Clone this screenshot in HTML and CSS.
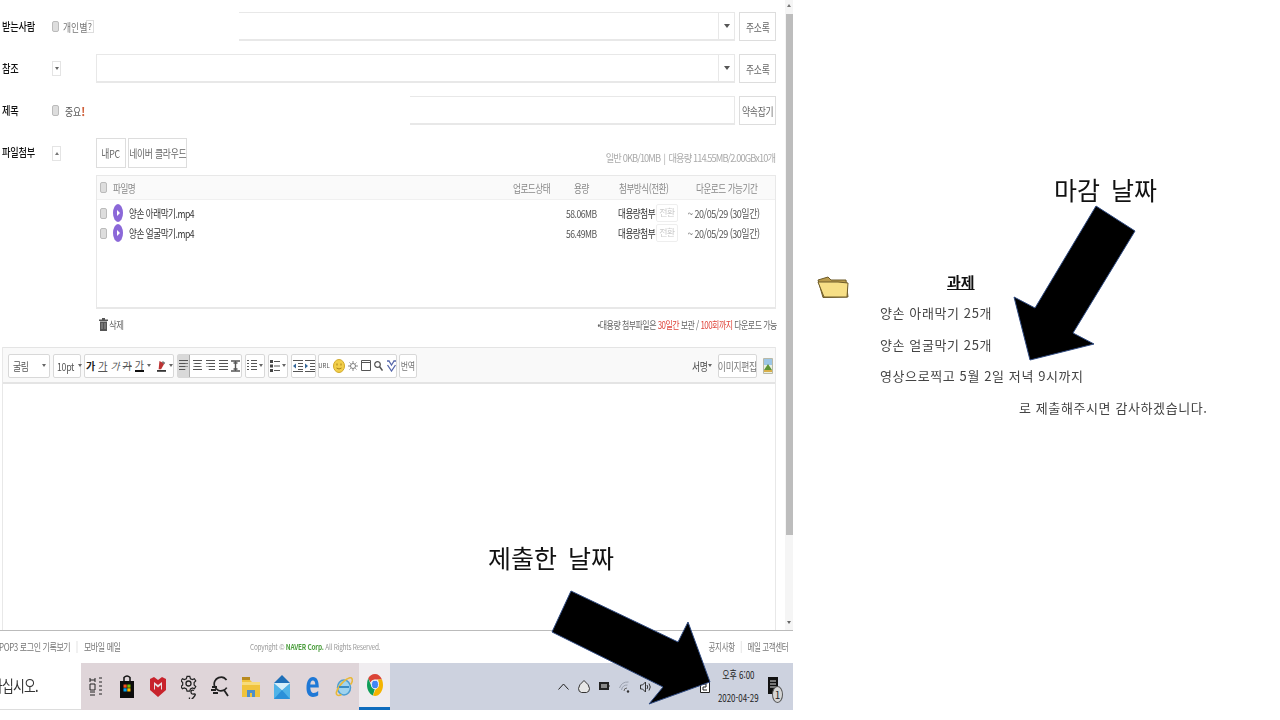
FILE: index.html
```html
<!DOCTYPE html>
<html lang="ko">
<head>
  <meta charset="UTF-8" />
  <title>과제 제출</title>
  <link rel="stylesheet" href="styles.css">
</head>
<body>
<div class="slide">

  <div class="shot">
    <div class="mail">
      <div class="compose">
        <div class="form-row">
          <span class="row-label"><span class="sq">받는사람</span></span>
          <span class="row-opt"><i class="check"></i><span class="opt-text"><span class="sq">개인별</span></span><span class="help">?</span></span>
          <div class="field field-to"><span class="field-arrow"><i class="tri"></i></span></div>
          <span class="btn btn-side"><span class="sq-c">주소록</span></span>
        </div>
        <div class="form-row">
          <span class="row-label"><span class="sq">참조</span></span>
          <span class="row-opt"><span class="mini-btn"><i class="tri tri-small"></i></span></span>
          <div class="field"><span class="field-arrow"><i class="tri"></i></span></div>
          <span class="btn btn-side"><span class="sq-c">주소록</span></span>
        </div>
        <div class="form-row">
          <span class="row-label"><span class="sq">제목</span></span>
          <span class="row-opt"><i class="check"></i><span class="opt-text opt-strong"><span class="sq">중요</span></span><span class="bang">!</span></span>
          <div class="field field-subject"></div>
          <span class="btn btn-side"><span class="sq-c">약속잡기</span></span>
        </div>
        <div class="form-row attach-row">
          <span class="row-label"><span class="sq">파일첨부</span></span>
          <span class="row-opt"><span class="mini-btn"><i class="tri tri-small tri-up"></i></span></span>
          <div class="attach-top">
            <span class="btn btn-tall"><span class="sq-c">내PC</span></span>
            <span class="btn btn-tall btn-cloud"><span class="sq-c">네이버 클라우드</span></span>
            <span class="quota">일반 0KB/10MB &nbsp;|&nbsp; 대용량 114.55MB/2.00GBx10개</span>
          </div>
        </div>

        <div class="files">
          <div class="file-head">
            <span class="col-name"><i class="check"></i><span class="sq">파일명</span></span>
            <span class="col-state"><span class="sq">업로드상태</span></span>
            <span class="col-size"><span class="sq">용량</span></span>
            <span class="col-type"><span class="sq">첨부방식(전환)</span></span>
            <span class="col-date"><span class="sq">다운로드 가능기간</span></span>
          </div>
          <div class="file-row">
            <span class="col-name"><i class="check"></i><i class="play"></i><b class="sq">양손 아래막기.mp4</b></span>
            <span class="col-state"></span>
            <span class="col-size"><span class="sq">58.06MB</span></span>
            <span class="col-type"><b class="sq">대용량첨부</b><em>전환</em></span>
            <span class="col-date"><span class="sq">~ 20/05/29 (30일간)</span></span>
          </div>
          <div class="file-row">
            <span class="col-name"><i class="check"></i><i class="play"></i><b class="sq">양손 얼굴막기.mp4</b></span>
            <span class="col-state"></span>
            <span class="col-size"><span class="sq">56.49MB</span></span>
            <span class="col-type"><b class="sq">대용량첨부</b><em>전환</em></span>
            <span class="col-date"><span class="sq">~ 20/05/29 (30일간)</span></span>
          </div>
        </div>
        <div class="file-foot">
          <span class="trash">
            <svg width="9" height="13" viewBox="0 0 9 13"><path fill="#555" d="M0 1.500h9V3H0zM3 0h3v1.500H3zM1 3.500h7V13H1z"/><path stroke="#999" d="M3 5v6M6 5v6"/></svg>
            <span class="sq">삭제</span>
          </span>
          <span class="notice">•대용량 첨부파일은 <u>30일간</u> 보관 / <u>100회까지</u> 다운로드 가능</span>
        </div>

        <div class="editor">
          <div class="toolbar">
            <span class="tool tool-font"><span class="sq">굴림</span><i class="tri tri-small"></i></span>
            <span class="tool tool-size"><span class="sq">10pt</span><i class="tri tri-small"></i></span>
            <span class="tool tool-group tool-text">
              <span class="t-bold">가</span><span class="t-under">가</span><span class="t-it">가</span><span class="t-strike">가</span><span class="t-color">가</span><i class="tri tri-small"></i><span class="t-sep"></span>
              <svg width="9" height="14" viewBox="0 0 11 14"><path fill="#b33" d="M3 1l6 3-4 7H2z"/><path fill="#777" d="M7 1l3 2-1 2-3-2z"/><path fill="#222" d="M0 12h11v2H0z"/></svg><i class="tri tri-small"></i>
            </span>
            <span class="tool tool-group tool-align">
              <span class="align-on"><i class="lines lines-left"></i></span>
              <span><i class="lines lines-center"></i></span>
              <span><i class="lines lines-right"></i></span>
              <span><i class="lines"></i></span>
              <svg width="9" height="12" viewBox="0 0 9 12"><path stroke="#555" stroke-width="1.400" fill="none" d="M0 1h9M0 11h9M4.500 1v10M2.500 3h4M2.500 9h4"/></svg>
            </span>
            <span class="tool tool-group tool-list">
              <svg width="10" height="14" viewBox="0 0 10 14"><path stroke="#555" d="M0 1.500h2M0 4.500h2M0 7.500h2M0 10.500h2M4 1.500h6M4 4.500h6M4 7.500h6M4 10.500h6"/></svg><i class="tri tri-small"></i>
            </span>
            <span class="tool tool-group tool-list">
              <svg width="10" height="12" viewBox="0 0 10 12"><path fill="#444" d="M0 0h3v3H0zM0 4.500h3v3H0zM0 9h3v3H0z"/><path stroke="#555" d="M4 1.500h6M4 6h6M4 10.500h6"/></svg><i class="tri tri-small"></i>
            </span>
            <span class="tool tool-group tool-indent">
              <svg width="10" height="12" viewBox="0 0 10 12"><path stroke="#555" d="M0 .5h10M5 3.500h5M5 6.500h5M5 9.500h5M0 11.500h10"/><path fill="#369" d="M0 6l3-2.500v5z"/></svg>
              <svg width="10" height="12" viewBox="0 0 10 12"><path stroke="#555" d="M0 .5h10M5 3.500h5M5 6.500h5M5 9.500h5M0 11.500h10"/><path fill="#369" d="M3 6L0 3.500v5z"/></svg>
            </span>
            <span class="tool tool-group tool-insert">
              <span class="t-url">URL</span>
              <svg width="12" height="14" viewBox="0 0 12 14"><ellipse cx="6" cy="7" rx="5.500" ry="6.500" fill="#f2cf4a" stroke="#d1a92c"/><path fill="none" stroke="#a97f15" d="M3.500 9q2.500 2 5 0"/><path fill="#a97f15" d="M3.500 4.500h1v2h-1zM7.500 4.500h1v2h-1z"/></svg>
              <svg width="10" height="10" viewBox="0 0 10 10"><circle cx="5" cy="5" r="2.500" fill="none" stroke="#777"/><path stroke="#888" d="M5 0v2M5 8v2M0 5h2M8 5h2M1.500 1.500l1.200 1.200M7.300 7.300l1.200 1.200M8.500 1.500L7.300 2.700M2.700 7.300L1.500 8.500"/></svg>
              <svg width="10" height="11" viewBox="0 0 10 11"><path fill="#fff" stroke="#555" d="M.5.500h9v10h-9z"/><path stroke="#555" d="M0 2.500h10"/></svg>
              <svg width="9" height="10" viewBox="0 0 9 10"><circle cx="3.500" cy="3.500" r="2.800" fill="none" stroke="#555" stroke-width="1.200"/><path stroke="#555" stroke-width="1.500" d="M5.500 5.500L8.500 9.500"/></svg>
              <svg width="11" height="12" viewBox="0 0 11 12"><path fill="none" stroke="#56a" stroke-width="1.300" d="M1 1h2.500M7.500 1H10M1.500 5L5.500 11 9.500 5M3 1l2.500 4L8 1"/></svg>
            </span>
            <span class="tool tool-translate"><span class="sq-c">번역</span></span>
            <span class="toolbar-end">
              <span class="sign"><span class="sq-r">서명</span><i class="tri tri-small"></i></span>
              <span class="tool tool-image"><span class="sq-c">이미지편집</span></span>
              <svg width="10" height="16" viewBox="0 0 10 16"><path fill="#e9efe3" stroke="#b9b9a6" d="M.5.500h9v15h-9z"/><path fill="#9cc6e6" d="M1 1h8v6H1z"/><path fill="#5e9436" d="M1 12l4-6 4 6z"/><path fill="#d8b04a" d="M1 12h8v2H1z"/></svg>
            </span>
          </div>
          <div class="edit-area"></div>
        </div>
      </div>

      <div class="scrollbar">
        <i class="tri tri-small tri-up"></i>
        <span class="thumb"></span>
        <i class="tri tri-small"></i>
      </div>
    </div>

    <div class="mail-foot">
      <span class="foot-left"><span class="sq">POP3 로그인 기록보기<span class="pipe"></span>모바일 메일</span></span>
      <span class="copyright">Copyright © <b>NAVER Corp.</b> All Rights Reserved.</span>
      <span class="foot-right"><span class="sq-r">공지사항<span class="pipe"></span>메일 고객센터</span></span>
    </div>

    <div class="taskbar">
      <div class="search"><span class="sq">하십시오.</span></div>
      <div class="pinned">
        <span class="pin">
          <svg width="14" height="20" viewBox="0 0 14 20"><path stroke="#222" fill="none" d="M1 1v4M6 1v4M1 3h5M1 7h5v6H1zM1 15h5M1 18h5M10 1h3M10 5h3M10 9h3M10 13h3M10 17h3"/></svg>
        </span>
        <span class="pin">
          <svg width="16" height="23" viewBox="0 0 16 23"><path fill="none" stroke="#111" stroke-width="1.500" d="M5 6V2.500Q8-.5 11 2.500V6"/><path fill="#0c0c0c" d="M1 6h14v17H1z"/><path fill="#f25022" d="M4.500 9.500h3.200v3.200H4.500z"/><path fill="#7fba00" d="M8.300 9.500h3.200v3.200H8.300z"/><path fill="#00a4ef" d="M4.500 13.300h3.200v3.200H4.500z"/><path fill="#ffb900" d="M8.300 13.300h3.200v3.200H8.300z"/></svg>
        </span>
        <span class="pin">
          <svg width="16" height="20" viewBox="0 0 16 20"><path fill="#c8232c" d="M0 2l4-2 4 3 4-3 4 2v11l-8 7-8-7z"/><path fill="#e9dfe1" d="M4 5l4 3 4-3v7l-1 1V8L8 10.500 5 8v5l-1-1z"/></svg>
        </span>
        <span class="pin">
          <svg width="16" height="24" viewBox="0 0 16 24"><path fill="none" stroke="#222" stroke-width="1.300" d="M6 1h3l.7 2.500 2.300 1 2-1 1.500 2.500-1.800 1.700v2.600L15.500 12 14 14.500l-2-1-2.300 1L9 17H6l-.7-2.500-2.300-1-2 1L-.500 12 1.300 10.300V7.700L-.5 6 1 3.500l2 1 2.300-1z" transform="translate(.5 .5) scale(.92)"/><circle cx="7.500" cy="8.500" r="2.500" fill="none" stroke="#222" stroke-width="1.300"/><path fill="none" stroke="#222" stroke-width="1.300" d="M13 15.500q-3-1-3 1.500t3 2-1 4-3.500-.5"/></svg>
        </span>
        <span class="pin">
          <svg width="18" height="22" viewBox="0 0 18 22"><circle cx="10" cy="8" r="6.800" fill="none" stroke="#222" stroke-width="1.700" stroke-dasharray="30 8" transform="rotate(70 10 8)"/><path stroke="#222" stroke-width="1.800" d="M13 14l4 6M1 11h5M0 14h5M2 17h5"/></svg>
        </span>
        <span class="pin">
          <svg width="18" height="20" viewBox="0 0 18 20"><path fill="#f0c33c" d="M0 3h8l2 2h8v15H0z"/><path fill="#b88a1e" d="M0 0h8v3H0z"/><path fill="#f7dc7c" d="M0 5h18v3H0z"/><path fill="#4f8fca" d="M5 20v-7h8v7h-3v-4H8v4z"/></svg>
        </span>
        <span class="pin">
          <svg width="16" height="24" viewBox="0 0 16 24"><path fill="#1e6fb8" d="M8 0l8 8H0z"/><path fill="#4fb3e8" d="M0 8l8 7 8-7v16H0z"/><path fill="#d5eefa" d="M0 8h16l-8 7z"/><path fill="#2a90d9" d="M0 24l8-9 8 9z"/></svg>
        </span>
        <span class="pin">
          <svg width="13" height="20" viewBox="0 0 13 20"><path fill="#1f78d6" d="M.5 11C.5 4 3 0 7 0s5.800 4 5.800 10.500H4.300c.2 4 1.500 5.500 3.400 5.500 1.600 0 3.200-.9 4.500-2v4.300C10.900 19.300 9 20 7 20c-4.300 0-6.500-3.500-6.500-9zM4.300 7.500h5C9.200 5 8.400 3.500 6.900 3.500S4.500 5 4.300 7.500z"/></svg>
        </span>
        <span class="pin">
          <svg width="18" height="20" viewBox="0 0 18 20"><ellipse cx="9" cy="10.500" rx="6.500" ry="7.500" fill="#9fd3ee" stroke="#4c9ed2" stroke-width="1.500"/><path fill="none" stroke="#e8b93a" stroke-width="1.600" d="M16 .5C12 1 4 7 1.500 15c-.8 3 1.500 4.500 5 2.500M16 .5c2 1.500 1.800 4-.5 7"/><path stroke="#3b8cc4" stroke-width="2" d="M4 10h10"/></svg>
        </span>
        <span class="pin pin-active">
          <svg width="16" height="24" viewBox="0 0 16 24"><path fill="#db4437" d="M8 1c3 0 5.600 2 7 5.500H8C6 6.500 4.200 7.600 3.400 9.500L1.200 5.200C2.600 2.700 5 1 8 1z"/><path fill="#0f9d58" d="M1.200 5.200l3 7.500c.8 2 2 3 3.600 3.300L5.900 22.500C2.500 21 0 17 0 12c0-2.500.4-4.800 1.200-6.800z"/><path fill="#f4b400" d="M15 6.500c.7 1.700 1 3.500 1 5.500 0 6-3.500 11-8 11l-2.100-.5 3.100-7c2-1 3-3 2.800-5.500L11 6.500z"/><ellipse cx="8" cy="11.500" rx="3.500" ry="4.200" fill="#4285f4" stroke="#f1eef1"/></svg>
        </span>
      </div>
      <div class="tray">
        <div class="tray-icons">
          <svg width="11" height="7" viewBox="0 0 11 7"><path fill="none" stroke="#222" d="M.5 6.500l5-5.500 5 5.500"/></svg>
          <svg width="12" height="13" viewBox="0 0 12 13"><path fill="#e6e6e6" stroke="#333" d="M6 .5Q11.500 5 11.500 8.500t-3 4h-5q-3-.5-3-4T6 .5z"/></svg>
          <svg width="11" height="9" viewBox="0 0 11 9"><path fill="#222" d="M0 0h10v8H0z"/><path fill="#888" d="M2 2h6v4H2zM10 3h1v2h-1z"/></svg>
          <svg width="12" height="12" viewBox="0 0 12 12"><path fill="none" stroke="#9aa0ad" d="M.5 7a9 9 0 0 1 9-6M2.500 9a6 6 0 0 1 6-5"/><path fill="none" stroke="#666" d="M5 10a3 3 0 0 1 3-3"/><circle cx="9" cy="10.500" r="1.200" fill="#333"/></svg>
          <svg width="11" height="12" viewBox="0 0 11 12"><path fill="none" stroke="#333" d="M.5 4v4h2l3 3V1l-3 3zM7 4q1.500 2 0 4M9 2.500q2.500 3.500 0 7"/></svg>
          <svg class="ime" width="10" height="12" viewBox="0 0 10 12"><path fill="#fff" stroke="#222" d="M.5.500h9v11h-9z"/><path fill="none" stroke="#222" d="M3 3h3v3H3v3h4"/></svg>
        </div>
        <div class="clock"><span class="sq-c">오후 6:00</span><span class="sq-c">2020-04-29</span></div>
        <div class="notify">
          <svg width="10" height="17" viewBox="0 0 10 17"><path fill="#111" d="M0 0h10v17H0z"/><path stroke="#ddd" d="M2 4h6M2 7h6M2 10h6"/></svg>
          <b>1</b>
        </div>
      </div>
    </div>
  </div>

  <div class="side">
    <svg class="folder" width="32" height="22" viewBox="0 0 32 22"><path fill="#b99b4c" stroke="#6f5c2a" d="M1 4l10-3 3 3h15l2 17-25 .5z"/><path fill="#f7df86" stroke="#6f5c2a" d="M1 6h20l10 1-1 14H7z"/></svg>
    <div class="task">
      <h3>과제</h3>
      <p>양손 아래막기 25개</p>
      <p>양손 얼굴막기 25개</p>
      <p>영상으로찍고 5월 2일 저녁 9시까지</p>
      <p class="task-end">로 제출해주시면 감사하겠습니다.</p>
    </div>
  </div>

  <span class="note note-sent">제출한 날짜</span>
  <span class="note note-due">마감 날짜</span>
  <svg class="arrows" width="1280" height="720" viewBox="0 0 1280 720">
    <path d="M571 591L552 632 663 687 649 704 710 682 688 622 678 642z"/>
    <path d="M1096 206L1135 231 1073 333 1094 344 1030 360 1014 297 1035 308z"/>
  </svg>
</div>
</body>
</html>
```

FILE: styles.css
```css
* { box-sizing: border-box; }

html, body {
  margin: 0;
  padding: 0;
  height: 100%;
  background: white;
  overflow: hidden;
}

body {
  font-family: "Noto Sans CJK KR", "Noto Sans", sans-serif;
  color: #444;
  white-space: nowrap;
}

i, em { font-style: normal; }

/* the screenshot text is squeezed sideways */
.sq, .sq-c, .sq-r {
  display: inline-block;
  transform: scaleX(.8);
}

.sq { transform-origin: left center; }
.sq-c { transform-origin: center; }
.sq-r { transform-origin: right center; }

.slide {
  position: relative;
  display: flex;
  width: 1280px;
  height: 720px;
}

/* screenshot on the left */
.shot {
  width: 793px;
  height: 710px;
  display: flex;
  flex-direction: column;
  overflow: hidden;
  filter: blur(.35px);
}

.mail {
  display: flex;
  height: 631px;
  border-bottom: 1px solid #bbb;
}

.compose {
  width: 785px;
  padding: 12px 9px 0 2px;
}

.form-row {
  display: flex;
  align-items: center;
  height: 29px;
  margin-bottom: 13px;
  font-size: 11px;
}

.row-label {
  width: 50px;
  padding-bottom: 2px;
  color: #111;
  font-weight: 500;
}

.row-label .sq { font-size: 11.500px; letter-spacing: -.3px; }

.row-opt {
  width: 44px;
  display: flex;
  align-items: center;
  gap: 3px;
  color: #777;
}

.opt-text { width: 20px; margin-left: 1px; font-size: 11px; }
.opt-strong { width: 13px; margin-left: 3px; color: #555; }
.bang { color: #d0603a; font-weight: 700; font-size: 12px; }

.help {
  flex: none;
  width: 8px;
  height: 13px;
  border: 1px solid #ddd;
  font-size: 9px;
  line-height: 11px;
  text-align: center;
}

.check {
  display: inline-block;
  flex: none;
  width: 7px;
  height: 11px;
  background: #ddd;
  border: 1px solid #bbb;
  border-radius: 2px;
}

.mini-btn {
  width: 9px;
  height: 15px;
  border: 1px solid #e4e4e4;
  display: flex;
  align-items: center;
  justify-content: center;
}

.tri {
  display: inline-block;
  flex: none;
  width: 0;
  height: 0;
  border-left: 3px solid transparent;
  border-right: 3px solid transparent;
  border-top: 4px solid #555;
}

.tri-small {
  border-left-width: 2px;
  border-right-width: 2px;
  border-top: 3px solid #666;
}

.tri-up {
  border-top: 0;
  border-bottom: 3px solid #777;
}

.field {
  flex: 1;
  align-self: stretch;
  display: flex;
  justify-content: flex-end;
  border: 1px solid #e8e8e8;
  border-bottom-width: 2px;
  margin-right: 4px;
}

.field-to {
  margin-left: 143px;
  border-left: 0;
}

.field-subject {
  margin-left: 314px;
  border-left: 0;
}

.field-arrow {
  width: 16px;
  border-left: 1px solid #e8e8e8;
  display: flex;
  align-items: center;
  justify-content: center;
}

.btn {
  display: flex;
  align-items: center;
  justify-content: center;
  border: 1px solid #ddd;
  background: white;
  color: #666;
  font-size: 11px;
  letter-spacing: -.3px;
}

.btn-side {
  width: 37px;
  align-self: stretch;
}

.attach-row { margin-bottom: 7px; height: 30px; }

.attach-top {
  flex: 1;
  display: flex;
  align-items: center;
  gap: 2px;
  align-self: stretch;
}

.btn-tall {
  width: 30px;
  height: 30px;
}

.btn-cloud { width: 59px; }

.quota {
  margin-left: auto;
  margin-right: 1px;
  padding-top: 8px;
  font-size: 10px;
  letter-spacing: -1px;
  color: #aaa;
  transform: scaleX(.93);
  transform-origin: right center;
}

.files {
  margin-left: 94px;
  height: 134px;
  border: 1px solid #e8e8e8;
  border-bottom-width: 2px;
  font-size: 11px;
  letter-spacing: -.6px;
}

.files .sq { transform: scaleX(.78); }

.file-head, .file-row {
  display: flex;
  align-items: center;
}

.file-head {
  height: 24px;
  margin-bottom: 3px;
  background: #fafafa;
  border-bottom: 1px solid #f0f0f0;
  color: #888;
}

.file-row { height: 20px; color: #555; }
.file-row b { font-weight: 400; color: #333; }

.col-name { width: 432px; display: flex; align-items: center; gap: 6px; padding-left: 3px; }
.col-state { width: 55px; }
.col-size { width: 50px; }
.col-type { width: 87px; display: flex; align-items: center; }
.col-date { flex: 1; margin-left: -6px; }

.file-head .col-state { width: 56px; }
.file-head .col-size { width: 53px; padding-left: 7px; }

.file-row .col-name { gap: 5px; }
.file-row .col-name b { margin-left: 1px; }
.file-row .col-size { width: 54px; margin-left: 3px; }
.file-row .col-date { margin-left: -13px; }
.file-row .col-date .sq { transform: scaleX(.82); }

.col-type em {
  flex: none;
  margin-left: -9px;
  border: 1px solid #eee;
  border-radius: 2px;
  height: 18px;
  line-height: 15px;
  padding: 0 2px;
  font-size: 9px;
  color: #ccc;
}

.play {
  position: relative;
  flex: none;
  width: 10px;
  height: 18px;
  margin-left: 1px;
  border-radius: 50%;
  background: #8b68d8;
}

.play::after {
  content: "";
  position: absolute;
  left: 4px;
  top: 6px;
  border-left: 3px solid white;
  border-top: 3px solid transparent;
  border-bottom: 3px solid transparent;
}

.file-foot {
  display: flex;
  justify-content: space-between;
  align-items: center;
  height: 31px;
  margin-left: 97px;
  margin-right: -1px;
  margin-bottom: 7px;
  font-size: 10.500px;
  letter-spacing: -.7px;
  color: #666;
}

.trash { display: flex; align-items: center; gap: 1px; }

.notice {
  transform: scaleX(.76);
  transform-origin: right center;
}

.notice u {
  text-decoration: none;
  color: #e0463c;
}

.editor {
  border-left: 1px solid #e8e8e8;
  border-right: 1px solid #e8e8e8;
  height: 283px;
}

.toolbar {
  display: flex;
  align-items: center;
  gap: 3px;
  height: 37px;
  padding: 1px 2px 0 5px;
  background: #f9f9f9;
  border-top: 1px solid #e4e4e4;
  border-bottom: 2px solid #e4e4e4;
  font-size: 11px;
  letter-spacing: -.4px;
}

.tool {
  flex: none;
  display: flex;
  align-items: center;
  justify-content: center;
  height: 24px;
  background: white;
  border: 1px solid #d8d8d8;
  border-radius: 2px;
  color: #555;
}

.tool svg { flex: none; }

.tool-font { width: 42px; justify-content: space-between; padding: 0 3px 0 4px; }
.tool-size { width: 28px; justify-content: space-between; padding: 0 2px 0 3px; }
.tool-group { gap: 5px; padding: 0 3px; }
.tool-text { width: 90px; gap: 3px; padding: 0 0 0 1px; font-size: 10px; letter-spacing: 0; justify-content: flex-start; }
.tool-align { width: 65px; gap: 2px; padding: 0; justify-content: flex-start; }
.tool-list { width: 20px; gap: 2px; padding: 0; }
.tool-indent { width: 25px; gap: 2px; padding: 0; }
.tool-insert { width: 79px; gap: 3px; padding: 0 2px; margin-left: -1px; }
.tool-translate { width: 18px; margin-left: -1px; color: #777; font-size: 10px; letter-spacing: -.4px; }

.t-bold { font-weight: 700; color: #222; }
.t-under { text-decoration: underline; }
.t-it { font-style: italic; }
.t-strike { text-decoration: line-through; }
.t-color { border-bottom: 2px solid #111; line-height: 11px; }
.t-sep { width: 1px; height: 22px; background: #ddd; }
.t-url { font-size: 6px; letter-spacing: 0; }

.lines {
  display: block;
  width: 9px;
  height: 11px;
  background: repeating-linear-gradient(#555 0 1px, transparent 1px 3px);
}

.lines-left { clip-path: polygon(0 0, 100% 0, 100% 10%, 70% 10%, 70% 30%, 100% 30%, 100% 40%, 70% 40%, 70% 60%, 100% 60%, 100% 70%, 70% 70%, 70% 100%, 0 100%); }
.lines-center { clip-path: polygon(0 0, 100% 0, 100% 30%, 85% 30%, 85% 60%, 100% 60%, 100% 100%, 0 100%, 0 60%, 15% 60%, 15% 30%, 0 30%); }
.lines-right { clip-path: polygon(0 0, 100% 0, 100% 100%, 30% 100%, 30% 60%, 0 60%, 0 30%, 30% 30%, 30% 10%, 0 10%); }

.tool-align > span {
  display: flex;
  align-items: center;
  justify-content: center;
  width: 11px;
  height: 100%;
}

.tool-align > .align-on {
  width: 12px;
  background: #d9d9d9;
  border-right: 1px solid #aaa;
}

.toolbar-end {
  margin-left: auto;
  display: flex;
  align-items: center;
  gap: 6px;
}

.sign { display: flex; align-items: center; gap: 1px; }
.tool-image { width: 39px; color: #777; }

.edit-area { height: 245px; background: white; }

.scrollbar {
  width: 8px;
  display: flex;
  flex-direction: column;
  align-items: center;
  gap: 7px;
  padding: 4px 0;
  background: #f5f5f5;
}

.thumb {
  flex: none;
  width: 7px;
  height: 521px;
  background: #bdbdbd;
  margin-bottom: 79px;
}

.mail-foot {
  display: flex;
  align-items: center;
  height: 32px;
  margin-left: -1px;
  padding-bottom: 2px;
  font-size: 10px;
  letter-spacing: -.5px;
  color: #777;
}

.foot-left { width: 251px; }

.pipe {
  display: inline-block;
  width: 1px;
  height: 12px;
  margin: 0 8px;
  background: #ddd;
  vertical-align: -2px;
}

.copyright {
  font-size: 8px;
  letter-spacing: -.3px;
  color: #999;
  transform: scaleX(.81);
  transform-origin: left center;
}

.copyright b { color: #4d9f3f; }

.foot-right { margin-left: auto; padding-right: 5px; }
.foot-right .sq-r { transform: scaleX(.75); }

.taskbar {
  display: flex;
  height: 47px;
}

.search {
  width: 81px;
  background: white;
  border-bottom: 1px solid #ddd;
  font-size: 16px;
  letter-spacing: -1px;
  line-height: 44px;
  color: #333;
  overflow: hidden;
}

.search .sq { margin-left: -9px; }

.pinned {
  display: flex;
  width: 309px;
  background: #dfd5d9;
}

.pin {
  flex: 1;
  display: flex;
  align-items: center;
  justify-content: center;
}

.pin-active {
  background: #f0edf0;
  border-bottom: 3px solid #0f6cbd;
}

.tray {
  flex: 1;
  display: flex;
  align-items: center;
  background: #cdd2df;
  color: #222;
}

.tray-icons {
  flex: none;
  display: flex;
  align-items: center;
  gap: 9px;
  width: 322px;
  padding-left: 168px;
}

.ime { margin-left: 40px; }

.clock {
  flex: none;
  display: flex;
  flex-direction: column;
  align-items: center;
  gap: 7px;
  width: 40px;
  margin: -3px 0 0 6px;
  font-size: 11px;
  line-height: 16px;
}

.clock .sq-c { transform: scaleX(.72); }

.notify {
  position: relative;
  display: flex;
  margin-left: 10px;
  margin-top: -3px;
}

.notify b {
  position: absolute;
  left: 4px;
  top: 9px;
  width: 11px;
  height: 17px;
  border: 1px solid #555;
  border-radius: 50%;
  background: #d5d5d5;
  font-size: 10px;
  font-weight: 400;
  line-height: 15px;
  text-align: center;
}

/* notes on the right */
.side {
  flex: 1;
  display: flex;
  align-items: flex-start;
  padding: 276px 0 0 24px;
  filter: blur(.25px);
}

.task {
  margin-left: 31px;
  font-size: 13px;
  letter-spacing: .6px;
  color: #444;
}

.task h3 {
  margin: -4px 0 11px 67px;
  font-size: 15px;
  line-height: 20px;
  font-weight: 700;
  letter-spacing: 0;
  color: #111;
  text-decoration: underline;
}

.task p {
  margin: 0 0 12px;
  line-height: 19.500px;
}

.task .task-end { margin-left: 139px; }

/* annotations on top of everything */
.note {
  position: absolute;
  font-size: 25px;
  line-height: 32px;
  color: #111;
  word-spacing: 4px;
  white-space: nowrap;
}

.note-sent { left: 488px; top: 541px; }
.note-due { left: 1054px; top: 173px; }

.arrows {
  position: absolute;
  left: 0;
  top: 0;
  pointer-events: none;
}

.arrows path {
  fill: black;
  stroke: #2f4a80;
  stroke-width: 1;
}
```
